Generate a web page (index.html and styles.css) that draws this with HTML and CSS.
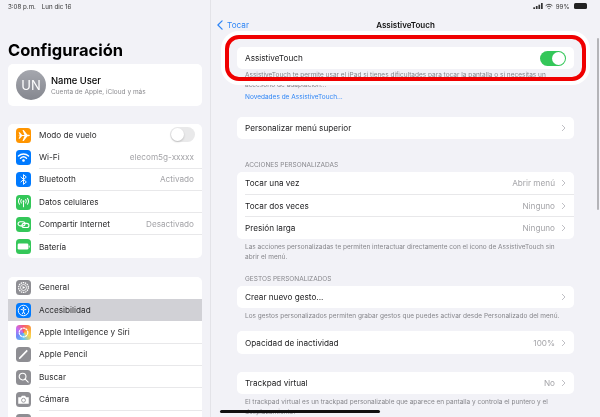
FILE: index.html
```html
<!DOCTYPE html>
<html lang="es">
<head>
<meta charset="utf-8">
<title>AssistiveTouch</title>
<link rel="stylesheet" href="styles.css">
</head>
<body>
<div class="app">
  <aside class="sidebar">
    <div class="status status-left"><span>3:08 p.m.</span><span>Lun dic 16</span></div>
    <h1 class="big-title">Configuración</h1>
    <div class="card profile">
      <div class="avatar">UN</div>
      <div class="profile-text">
        <div class="profile-name">Name User</div>
        <div class="profile-sub">Cuenta de Apple, iCloud y más</div>
      </div>
    </div>
    <div class="card group">
      <div class="srow"><span class="ico orange"><svg viewBox="0 0 16 16"><path d="M2 8l2-.2L2.8 4.6h1.1L6.6 7.5 9 7.4 6.9 2.2h1.3l4 5.1h1.3c.8 0 1.3.3 1.3.7s-.5.7-1.3.7h-1.3l-4 5.1H6.9L9 8.6l-2.4-.1-2.7 2.9H2.8L4 8.2 2 8z" fill="#fff"/></svg></span><div class="slabel"><span>Modo de vuelo</span><span class="toggle-off"><i></i></span></div></div>
      <div class="srow"><span class="ico blue"><svg viewBox="0 0 16 16" fill="none" stroke="#fff" stroke-width="1.5" stroke-linecap="round"><path d="M2.6 6.4a8 8 0 0 1 10.8 0"/><path d="M4.8 8.7a4.8 4.8 0 0 1 6.4 0"/><circle cx="8" cy="11.2" r=".7" fill="#fff"/></svg></span><div class="slabel"><span>Wi-Fi</span><span class="val">elecom5g-xxxxx</span></div></div>
      <div class="srow"><span class="ico blue"><svg viewBox="0 0 16 16" fill="none" stroke="#fff" stroke-width="1"><path d="M5 5.2l6 5.4L8 13.2V2.8l3 2.6-6 5.4"/></svg></span><div class="slabel"><span>Bluetooth</span><span class="val">Activado</span></div></div>
      <div class="srow"><span class="ico green"><svg viewBox="0 0 16 16" fill="none" stroke="#fff" stroke-width="1.1" stroke-linecap="round"><path d="M8 8v4.5"/><circle cx="8" cy="6.6" r="1" fill="#fff" stroke="none"/><path d="M5.7 4.8a3 3 0 0 0 0 3.8M10.3 4.8a3 3 0 0 1 0 3.8M3.8 3.6a5.2 5.2 0 0 0 0 6.2M12.2 3.6a5.2 5.2 0 0 1 0 6.2"/></svg></span><div class="slabel"><span>Datos celulares</span></div></div>
      <div class="srow"><span class="ico green"><svg viewBox="0 0 16 16" fill="none" stroke="#fff" stroke-width="1.2"><rect x="2.2" y="5" width="7.4" height="4.4" rx="2.2"/><rect x="6.4" y="6.8" width="7.4" height="4.4" rx="2.2"/></svg></span><div class="slabel"><span>Compartir Internet</span><span class="val">Desactivado</span></div></div>
      <div class="srow"><span class="ico green"><svg viewBox="0 0 16 16"><rect x="1.8" y="4.8" width="11.4" height="6.4" rx="1.4" fill="#fff"/><rect x="13.6" y="6.8" width="1" height="2.4" rx=".5" fill="#fff"/></svg></span><div class="slabel"><span>Batería</span></div></div>
    </div>
    <div class="card group clip">
      <div class="srow"><span class="ico gray"><svg viewBox="0 0 16 16" fill="none" stroke="#fff"><circle cx="8" cy="8" r="5.2" stroke-width="1.3" stroke-dasharray="1.6 .7"/><circle cx="8" cy="8" r="3.2" stroke-width=".9"/><path d="M7 6.4L10 8 7 9.6z" fill="#fff" stroke="none"/></svg></span><div class="slabel"><span>General</span></div></div>
      <div class="srow selected"><span class="ico blue"><svg viewBox="0 0 16 16" fill="none" stroke="#fff"><circle cx="8" cy="8" r="5.6" stroke-width="1"/><circle cx="8" cy="5.3" r="1" fill="#fff" stroke="none"/><path d="M5 6.8l3 .6 3-.6M8 7.4v2L6.4 12M8 9.4l1.6 2.6" stroke-width="1"/></svg></span><div class="slabel nosep"><span>Accesibilidad</span></div></div>
      <div class="srow"><span class="ico siri"><svg viewBox="0 0 16 16" fill="none" stroke="#fff" stroke-width="1.3"><circle cx="8" cy="8" r="4.6" stroke-dasharray="2.4 .5"/></svg></span><div class="slabel"><span>Apple Intelligence y Siri</span></div></div>
      <div class="srow"><span class="ico gray"><svg viewBox="0 0 16 16"><path d="M3 13l.4-1.8 8-8.2 1.2 1.2-8 8.2z" fill="#fff"/></svg></span><div class="slabel"><span>Apple Pencil</span></div></div>
      <div class="srow"><span class="ico gray"><svg viewBox="0 0 16 16" fill="none" stroke="#fff" stroke-width="1.2" stroke-linecap="round"><circle cx="7" cy="7" r="3.6"/><path d="M9.8 9.8L13 13"/></svg></span><div class="slabel"><span>Buscar</span></div></div>
      <div class="srow"><span class="ico gray"><svg viewBox="0 0 16 16"><path d="M2.4 5.6h2.8L6.3 4h3.4l1.1 1.6h2.8v7H2.4z" fill="#fff"/><circle cx="8" cy="8.8" r="2.1" fill="none" stroke="#8e8e93" stroke-width=".9"/></svg></span><div class="slabel"><span>Cámara</span></div></div>
      <div class="srow"><span class="ico gray"></span><div class="slabel"></div></div>
    </div>
  </aside>
  <main class="detail">
    <div class="status status-right">
      <svg class="signal" viewBox="0 0 11 7"><rect x="0" y="5" width="2" height="2"/><rect x="3" y="3.5" width="2" height="3.5"/><rect x="6" y="2" width="2" height="5"/><rect x="9" y="0" width="2" height="7"/></svg>
      <svg class="wifi" viewBox="0 0 10 8" fill="none" stroke="#333" stroke-width="1.1"><path d="M.8 3a6 6 0 0 1 8.4 0M2.4 4.7a3.7 3.7 0 0 1 5.2 0"/><circle cx="5" cy="6.6" r=".8" fill="#333" stroke="none"/></svg>
      <span>99%</span>
      <span class="battery"></span>
    </div>
    <div class="nav">
      <div class="back"><svg viewBox="0 0 7 12" fill="none" stroke="#2f86f6" stroke-width="1.5" stroke-linecap="round" stroke-linejoin="round"><path d="M6 1L1 6l5 5"/></svg>Tocar</div>
      <div class="nav-title">AssistiveTouch</div>
    </div>
    <div class="content">
      <div class="card">
        <div class="drow first-row"><span>AssistiveTouch</span><span class="toggle-on"><i></i></span></div>
      </div>
      <p class="foot foot-intro">AssistiveTouch te permite usar el iPad si tienes dificultades para tocar la pantalla o si necesitas un accesorio de adaptación...</p>
      <a class="link">Novedades de AssistiveTouch...</a>
      <div class="card gap-menu">
        <div class="drow"><span>Personalizar menú superior</span><span class="val"><svg class="chev" viewBox="0 0 5 8"><path d="M1 1l3 3-3 3"/></svg></span></div>
      </div>
      <div class="head head-actions">ACCIONES PERSONALIZADAS</div>
      <div class="card">
        <div class="drow"><span>Tocar una vez</span><span class="val">Abrir menú<svg class="chev" viewBox="0 0 5 8"><path d="M1 1l3 3-3 3"/></svg></span></div>
        <div class="drow sep"><span>Tocar dos veces</span><span class="val">Ninguno<svg class="chev" viewBox="0 0 5 8"><path d="M1 1l3 3-3 3"/></svg></span></div>
        <div class="drow sep"><span>Presión larga</span><span class="val">Ninguno<svg class="chev" viewBox="0 0 5 8"><path d="M1 1l3 3-3 3"/></svg></span></div>
      </div>
      <p class="foot">Las acciones personalizadas te permiten interactuar directamente con el icono de AssistiveTouch sin abrir el menú.</p>
      <div class="head head-gest">GESTOS PERSONALIZADOS</div>
      <div class="card">
        <div class="drow"><span>Crear nuevo gesto...</span><span class="val"><svg class="chev" viewBox="0 0 5 8"><path d="M1 1l3 3-3 3"/></svg></span></div>
      </div>
      <p class="foot">Los gestos personalizados permiten grabar gestos que puedes activar desde Personalizado del menú.</p>
      <div class="card gap-op">
        <div class="drow"><span>Opacidad de inactividad</span><span class="val">100%<svg class="chev" viewBox="0 0 5 8"><path d="M1 1l3 3-3 3"/></svg></span></div>
      </div>
      <div class="card gap-track">
        <div class="drow"><span>Trackpad virtual</span><span class="val">No<svg class="chev" viewBox="0 0 5 8"><path d="M1 1l3 3-3 3"/></svg></span></div>
      </div>
      <p class="foot">El trackpad virtual es un trackpad personalizable que aparece en pantalla y controla el puntero y el desplazamiento.</p>
    </div>
    <div class="scrollbar"></div>
    <div class="highlight"></div>
  </main>
  <div class="home"></div>
</div>
</body>
</html>
```

FILE: styles.css
```css
* { box-sizing: border-box; }
html, body { margin: 0; height: 100%; }
body {
  width: 600px;
  height: 417px;
  overflow: hidden;
  background: #f2f2f7;
  font-family: Inter, "Liberation Sans", sans-serif;
  color: #1c1c1e;
  font-size: 8.2px;
}
.app { position: relative; display: flex; width: 600px; height: 417px; overflow: hidden; filter: blur(0.35px); }

.sidebar {
  width: 211px;
  flex: none;
  padding: 0 8px;
  border-right: 1px solid #e3e3e8;
  overflow: hidden;
}
.status { height: 12px; font-size: 6.2px; color: #333; display: flex; align-items: center; }
.status-left { gap: 6px; }
.big-title { margin: 28px 0 3px; height: 21px; font-size: 16.5px; line-height: 21px; font-weight: 700; color: #000; }
.card { background: #fff; border-radius: 5px; }
.profile {
  height: 42px;
  display: flex;
  align-items: center;
  padding-left: 8px;
  gap: 5px;
}
.avatar {
  width: 30px; height: 30px; border-radius: 50%;
  background: linear-gradient(#a5a7ae, #85878f);
  color: #fff;
  font-size: 13px;
  display: flex; align-items: center; justify-content: center;
  flex: none;
}
.profile-text { padding-top: 2px; }
.profile-name { font-size: 9.4px; font-weight: 500; color: #000; line-height: 12px; }
.profile-sub { font-size: 6.5px; color: #8a8a8e; line-height: 9px; margin-top: 1px; }
.group { margin-top: 18px; }
.clip { margin-top: 19px; border-radius: 5px 5px 0 0; }
.srow { height: 22.3px; display: flex; align-items: center; padding-left: 8px; }
.ico {
  width: 15px; height: 15px; border-radius: 3.5px; flex: none; margin-right: 8px;
  display: flex; align-items: center; justify-content: center;
}
.ico svg { width: 15px; height: 15px; display: block; }
.orange { background: #ff9500; }
.blue { background: #007aff; }
.green { background: #34c759; }
.gray { background: #8e8e93; }
.siri { background: conic-gradient(#f7596f, #f9a23b, #f8d64e, #63c7f5, #6f8bf7, #c76df2, #f7596f); }
.slabel {
  flex: 1; height: 100%;
  display: flex; align-items: center; justify-content: space-between;
  padding-right: 8px;
  color: #2c2c2e;
  border-bottom: 1px solid #e8e8ea;
}
.srow:last-child .slabel, .group > .srow:nth-child(6) .slabel { border-bottom: 0; }
.clip > .srow:nth-child(6) .slabel { border-bottom: 1px solid #e8e8ea; }
.nosep, .srow:first-child .slabel { border-bottom-color: transparent; }
.selected { background: #d1d1d6; }
.val { color: #a4a4a8; display: flex; align-items: center; }
.toggle-off { width: 25px; height: 15px; border-radius: 8px; background: #e9e9ea; padding: 1px; display: block; margin-right: -1px; }
.toggle-off i { display: block; width: 13px; height: 13px; border-radius: 50%; background: #fff; box-shadow: 0 1px 2px rgba(0,0,0,.2); }

.detail { position: relative; flex: 1; min-width: 0; }
.status-right { justify-content: flex-end; gap: 2.5px; padding-right: 13px; }
.signal { width: 10px; height: 6px; fill: #333; }
.wifi { width: 8px; height: 7px; }
.battery { width: 13px; height: 6px; border-radius: 1.5px; background: #222; margin-left: 2px; display: block; }
.nav { position: relative; height: 26px; display: flex; align-items: center; justify-content: center; }
.back { position: absolute; left: 6px; top: 0; height: 26px; display: flex; align-items: center; color: #2f86f6; gap: 4px; }
.back svg { width: 6px; height: 10px; }
.nav-title { font-weight: 600; color: #111; font-size: 8px; }
.content { padding: 9px 26px 0 26px; }
.drow {
  height: 22.3px;
  margin-left: 8px;
  display: flex; align-items: center; justify-content: space-between;
  padding-right: 8px;
  color: #1c1c1e;
}
.sep { border-top: 1px solid #e8e8ea; }
.first-row { height: 22px; }
.chev { width: 5px; height: 8px; margin-left: 6px; fill: none; stroke: #c0c0c5; stroke-width: 1; }
.foot { margin: 3px 8px 0; font-size: 6.5px; line-height: 10px; color: #86868b; }
.foot-intro { margin-top: 1px; }
.link { display: block; margin: 2px 8px 0; font-size: 6.5px; line-height: 10px; color: #2f86f6; }
.gap-menu { margin-top: 15px; }
.head { margin: 0 8px; font-size: 6.5px; line-height: 9px; color: #86868b; }
.head-actions { margin-top: 22px; margin-bottom: 1.5px; }
.head-gest { margin-top: 13px; margin-bottom: 2.5px; }
.gap-op { margin-top: 10px; }
.gap-track { margin-top: 18px; }
.toggle-on { width: 26px; height: 15px; border-radius: 8px; background: #34c759; padding: 1px; display: flex; justify-content: flex-end; }
.toggle-on i { display: block; width: 13px; height: 13px; border-radius: 50%; background: #fff; }

.scrollbar { position: absolute; left: 386px; top: 38px; width: 2px; height: 172px; border-radius: 1px; background: #b4b4b8; }
.highlight {
  position: absolute;
  left: 14px; top: 35px;
  width: 361px; height: 46px;
  border: 4px solid #f00000;
  border-radius: 14px;
  box-shadow: 0 0 0 4px #fff;
}
.home { position: absolute; left: 220px; top: 410px; width: 160px; height: 3px; border-radius: 2px; background: #111; }
```
